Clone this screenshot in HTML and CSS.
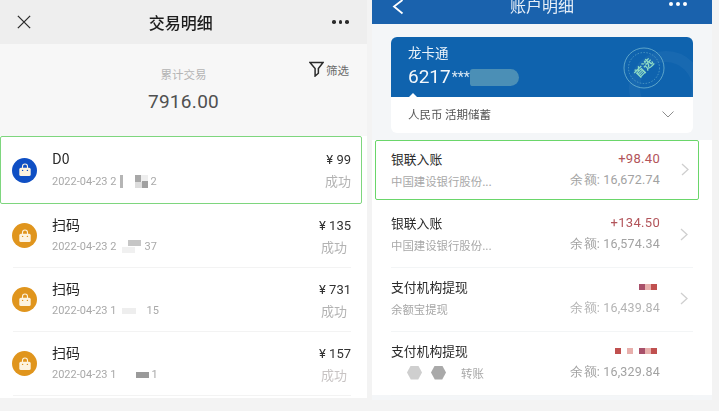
FILE: index.html
```html
<!DOCTYPE html>
<html lang="zh">
<head>
<meta charset="utf-8">
<title>交易明细</title>
<link rel="stylesheet" href="styles.css">
</head>
<body>
<main class="page">
  <section class="wx">
    <header class="wx-bar">
      <svg class="wx-close" viewBox="0 0 16 16"><path d="M1 1l14 14M15 1L1 15"/></svg>
      <h1 class="wx-title">交易明细</h1>
      <div class="dots"><i></i><i></i><i></i></div>
    </header>
    <div class="summary">
      <div class="filter">
        <svg class="filter-icon" viewBox="0 0 16 17"><path d="M1 1.500h14L10 8v5l-3.500 3V8z"/></svg>
        <span>筛选</span>
      </div>
      <div class="summary-label">累计交易</div>
      <div class="summary-value">7916.00</div>
    </div>
    <ul class="tx-list">
      <li class="tx tx-first">
        <span class="bag bag-blue"><svg viewBox="0 0 14 14"><path class="bag-handle" d="M4.500 5V3.500a2.500 2.500 0 0 1 5 0V5"/><rect class="bag-body" x="1.300" y="4.800" width="11.400" height="8.200" rx="1.600"/><circle class="bag-dot" cx="4.600" cy="7.400" r=".7"/><circle class="bag-dot" cx="9.400" cy="7.400" r=".7"/></svg></span>
        <div class="tx-main">
          <div class="tx-name">D0</div>
          <div class="tx-time">2022-04-23 2<b class="m m1"></b><b class="m m2"></b>2</div>
        </div>
        <div class="tx-side tx-side-first"><div class="tx-amt">¥ 99</div><div class="tx-state">成功</div></div>
      </li>
      <li class="tx">
        <span class="bag"><svg viewBox="0 0 14 14"><path class="bag-handle" d="M4.500 5V3.500a2.500 2.500 0 0 1 5 0V5"/><rect class="bag-body" x="1.300" y="4.800" width="11.400" height="8.200" rx="1.600"/><circle class="bag-dot" cx="4.600" cy="7.400" r=".7"/><circle class="bag-dot" cx="9.400" cy="7.400" r=".7"/></svg></span>
        <div class="tx-main">
          <div class="tx-name">扫码</div>
          <div class="tx-time">2022-04-23 2<b class="m m3"></b>37</div>
        </div>
        <div class="tx-side"><div class="tx-amt">¥ 135</div><div class="tx-state">成功</div></div>
      </li>
      <li class="tx">
        <span class="bag"><svg viewBox="0 0 14 14"><path class="bag-handle" d="M4.500 5V3.500a2.500 2.500 0 0 1 5 0V5"/><rect class="bag-body" x="1.300" y="4.800" width="11.400" height="8.200" rx="1.600"/><circle class="bag-dot" cx="4.600" cy="7.400" r=".7"/><circle class="bag-dot" cx="9.400" cy="7.400" r=".7"/></svg></span>
        <div class="tx-main">
          <div class="tx-name">扫码</div>
          <div class="tx-time">2022-04-23 1<b class="m m4"></b>15</div>
        </div>
        <div class="tx-side"><div class="tx-amt">¥ 731</div><div class="tx-state">成功</div></div>
      </li>
      <li class="tx">
        <span class="bag"><svg viewBox="0 0 14 14"><path class="bag-handle" d="M4.500 5V3.500a2.500 2.500 0 0 1 5 0V5"/><rect class="bag-body" x="1.300" y="4.800" width="11.400" height="8.200" rx="1.600"/><circle class="bag-dot" cx="4.600" cy="7.400" r=".7"/><circle class="bag-dot" cx="9.400" cy="7.400" r=".7"/></svg></span>
        <div class="tx-main">
          <div class="tx-name">扫码</div>
          <div class="tx-time">2022-04-23 1<b class="m m5"></b>1</div>
        </div>
        <div class="tx-side"><div class="tx-amt">¥ 157</div><div class="tx-state tx-state-light">成功</div></div>
      </li>
    </ul>
  </section>

  <section class="bank">
    <header class="bank-bar">
      <svg class="bank-back" viewBox="0 0 12 16"><path d="M10.500 1L2 7.500l8.500 7"/></svg>
      <h1 class="bank-title">账户明细</h1>
      <div class="dots dots-white"><i></i><i></i><i></i></div>
    </header>
    <div class="card">
      <div class="card-top">
        <span class="ring"></span>
        <div class="card-name">龙卡通</div>
        <div class="card-no">6217<span class="stars">***</span><b class="blob"></b></div>
        <svg class="stamp" viewBox="0 0 44 44">
          <circle class="stamp-o" cx="22" cy="22" r="20"/>
          <circle class="stamp-i" cx="22" cy="22" r="15.500"/>
          <text class="stamp-t" x="22" y="26" transform="rotate(-45 22 22)">首选</text>
        </svg>
        <span class="notch"></span>
      </div>
      <div class="card-bottom">
        <span>人民币 活期储蓄</span>
        <svg class="chev-down" viewBox="0 0 12 7"><path d="M.5.5L6 6 11.500.5"/></svg>
      </div>
    </div>
    <ul class="acc-list">
      <li class="acc acc-first">
        <div class="acc-row"><span class="acc-name">银联入账</span><span class="acc-amt">+98.40</span></div>
        <div class="acc-row"><span class="acc-sub">中国建设银行股份...</span><span class="acc-bal">余额: 16,672.74</span></div>
        <svg class="chev" viewBox="0 0 8 13"><path d="M1 1l6 5.500L1 12"/></svg>
      </li>
      <li class="acc">
        <div class="acc-row"><span class="acc-name">银联入账</span><span class="acc-amt">+134.50</span></div>
        <div class="acc-row"><span class="acc-sub">中国建设银行股份...</span><span class="acc-bal">余额: 16,574.34</span></div>
        <svg class="chev" viewBox="0 0 8 13"><path d="M1 1l6 5.500L1 12"/></svg>
      </li>
      <li class="acc">
        <div class="acc-row"><span class="acc-name">支付机构提现</span><span class="pix"><b class="p-c"></b><b class="p-b"></b><b class="p-a"></b></span></div>
        <div class="acc-row"><span class="acc-sub">余额宝提现</span><span class="acc-bal acc-bal-faded">余额: 16,439.84</span></div>
        <svg class="chev" viewBox="0 0 8 13"><path d="M1 1l6 5.500L1 12"/></svg>
      </li>
      <li class="acc">
        <div class="acc-row"><span class="acc-name">支付机构提现</span><span class="pix"><b class="p-a"></b><b class="p-gap"></b><b class="p-b"></b><b class="p-gap"></b><b class="p-c"></b><b class="p-b"></b><b class="p-a"></b></span></div>
        <div class="acc-row"><span class="acc-sub acc-sub-hex"><b class="hex hex-l"></b><b class="hex hex-d"></b><span class="tail">转账</span></span><span class="acc-bal">余额: 16,329.84</span></div>
      </li>
    </ul>
  </section>
</main>
</body>
</html>
```
FILE: styles.css
```css
* { box-sizing: border-box; }
html, body { margin: 0; padding: 0; }
body {
  width: 719px;
  height: 411px;
  overflow: hidden;
  background: #f3f3f3;
  font-family: "Noto Sans CJK SC", Roboto, sans-serif;
}
ul { list-style: none; margin: 0; padding: 0; }
h1 { margin: 0; font-weight: 500; }
.page { display: flex; align-items: flex-start; height: 411px; filter: blur(.3px); }
.page svg { display: block; }

/* left panel */
.wx { width: 367px; height: 398px; flex: none; background: #fff; }
.wx-bar {
  height: 44px;
  background: #eeeeee;
  display: flex;
  align-items: center;
  justify-content: space-between;
  padding: 0 18px 0 17px;
}
.wx-close { width: 14px; height: 14px; fill: none; stroke: #2b2b2b; stroke-width: 1.500; }
.wx-title { font-size: 16px; color: #1d1d1d; line-height: 22px; margin-right: 2px; }
.dots { display: flex; gap: 3px; }
.dots i { width: 3.500px; height: 3.500px; border-radius: 50%; background: #2b2b2b; }
.dots-white i { background: #fff; width: 4px; height: 4px; }

.summary {
  position: relative;
  height: 92px;
  background: #f7f7f7;
  padding-top: 22px;
  text-align: center;
}
.summary-label { font-size: 11.500px; line-height: 16px; color: #b4b4b4; }
.summary-value { font-family: Roboto, sans-serif; font-size: 19px; line-height: 24px; margin-top: 8px; color: #505050; letter-spacing: .3px; }
.filter {
  position: absolute;
  top: 17px;
  right: 18px;
  display: flex;
  align-items: center;
  gap: 2px;
  font-size: 11.500px;
  color: #6a6a6a;
}
.filter-icon { width: 15px; height: 16px; fill: none; stroke: #2b2b2b; stroke-width: 1.600; }
.filter span { transform: translateY(1px); }

.tx-list { background: #fff; }
.tx {
  position: relative;
  display: flex;
  align-items: center;
  height: 64px;
  margin: 0 16px 0 13px;
  border-bottom: 1px solid #f3f3f3;
}
.tx-first {
  height: 68px;
  margin: 0 5px 0 0;
  padding: 0 10px 0 12px;
  border: 1px solid #7ed67e;
  border-radius: 2px;
}
.tx-first .bag { margin-left: -1px; }
.bag {
  width: 25px;
  height: 25px;
  flex: none;
  margin-left: -1px;
  border-radius: 50%;
  color: #e0951d;
  background: #e0951d;
  display: flex;
  align-items: center;
  justify-content: center;
}
.bag-blue { color: #0f4fc4; background: #0f4fc4; }
.bag svg { width: 14px; height: 14px; }
.bag-handle { fill: none; stroke: #fdf3df; stroke-width: 1.100; }
.bag-body { fill: #fdf3df; }
.bag-dot { fill: currentColor; }
.tx-main { flex: 1; margin-left: 15px; padding-bottom: 3px; }
.tx-name { font-size: 14px; line-height: 20px; color: #262626; }
.tx-time {
  display: flex;
  align-items: center;
  height: 16px;
  margin-top: 5px;
  font-family: Roboto, sans-serif;
  font-size: 11px;
  color: #a9a9a9;
  white-space: nowrap;
}
.m { display: block; flex: none; }
.m1 { width: 3px; height: 13px; margin: 0 12px 0 4px; background: #b5b5b5; }
.m2 { width: 13px; height: 13px; margin-right: 2px; background: conic-gradient(#eee 0 25%, #a0a0a0 0 50%, #ddd 0 75%, #a8a8a8 0); }
.m3 { width: 13px; height: 6px; margin: 0 3px 0 12px; background: #c6c6c6; transform: translateY(-4px); box-shadow: -6px 7px 0 #f0f0f0; }
.m4 { width: 14px; height: 6px; margin: 0 10px 0 6px; background: #eeeeee; }
.m5 { width: 13px; height: 6px; margin: 0 2px 0 20px; background: #9a9a9a; }
.tx-side { text-align: right; width: 60px; }
.tx-amt { font-family: Roboto, sans-serif; font-size: 13px; line-height: 20px; color: #333; }
.tx-state { font-size: 13px; line-height: 18px; margin-top: 2px; margin-right: 4px; color: #b3b3b3; }
.tx-side-first .tx-state { margin-right: 0; }
.tx-state-light { color: #c8c4c4; }

/* right panel */
.bank {
  width: 340px;
  height: 400px;
  flex: none;
  margin-left: 5px;
  background: #f4f6f8;
}
.bank-bar {
  height: 24px;
  background: #1a62ad;
  display: flex;
  align-items: flex-start;
  justify-content: space-between;
  overflow: hidden;
  position: relative;
  padding: 0 25px 0 20px;
}
.bank-back { width: 12px; height: 16px; fill: none; stroke: #fff; stroke-width: 1.800; margin-top: -1px; }
.bank-title { position: absolute; left: 138px; top: -6px; font-size: 16px; line-height: 22px; font-weight: 400; color: #e6eef7; }
.dots-white { margin-top: 2px; }
.card {
  width: 302px;
  height: 96px;
  margin: 13px 0 0 19px;
  border-radius: 6px;
  overflow: hidden;
  background: #fff;
}
.card-top {
  position: relative;
  height: 60px;
  overflow: hidden;
  background: #0f63ae;
  padding: 5px 0 0 17px;
  color: #fff;
}
.ring {
  position: absolute;
  right: -10px;
  top: 14px;
  width: 74px;
  height: 74px;
  border: 11px solid #2a76b6;
  border-radius: 50%;
  opacity: .35;
}
.card-name { font-size: 13.500px; line-height: 20px; color: #eaf3fa; }
.card-no { display: flex; align-items: center; font-family: Roboto, sans-serif; font-size: 19px; line-height: 26px; margin-top: 2px; color: #f2f7fb; }
.stars { font-size: 14px; margin-left: 1px; color: #dce9f3; }
.blob { width: 49px; height: 17px; margin-left: 0; border-radius: 3px 9px 9px 3px; background: #4b8fb6; }
.stamp { position: absolute; right: 27px; top: 9px; width: 44px; height: 44px; }
.stamp-o { fill: none; stroke: #6fb4cf; stroke-width: .8; }
.stamp-i { fill: none; stroke: #6fb4cf; stroke-width: .6; stroke-dasharray: 1.500 1.500; }
.stamp-t { font-size: 11px; font-weight: 700; fill: #8fdcc4; text-anchor: middle; }
.notch {
  position: absolute;
  left: 18px;
  bottom: 0;
  width: 0;
  height: 0;
  border: 4px solid transparent;
  border-top: 0;
  border-bottom-color: #fff;
}
.card-bottom {
  height: 36px;
  display: flex;
  align-items: center;
  justify-content: space-between;
  padding: 0 19px 2px 17px;
  font-size: 11.500px;
  color: #555;
}
.chev-down { width: 12px; height: 7px; fill: none; stroke: #8d8d8d; stroke-width: 1; }

.acc-list { background: #fff; margin-top: 12px; height: 255px; }
.acc {
  position: relative;
  height: 64px;
  margin: 0 19px;
  padding: 8px 33px 0 0;
  border-bottom: 1px solid #f3f5f6;
}
.acc-first {
  height: 60px;
  margin: -5px 13px 4px 3px;
  padding: 7px 38px 0 15px;
  border: 1px solid #6ad66a;
  border-radius: 2px;
  background: #fff;
}
.acc-row { display: flex; align-items: center; justify-content: space-between; height: 21px; }
.acc-row + .acc-row { margin-top: 1px; }
.acc-name { font-size: 12.800px; color: #2b2b2b; }
.acc-amt { font-family: Roboto, sans-serif; font-size: 13px; color: #b2545a; letter-spacing: .3px; }
.acc-sub { font-size: 11.400px; color: #a8a8a8; }
.acc-bal { font-family: Roboto, sans-serif; font-size: 12.500px; color: #a2a2a2; letter-spacing: .2px; }
.acc-bal-faded { color: #b4b4b4; }
.chev { position: absolute; right: 5px; top: 24px; width: 8px; height: 13px; fill: none; stroke: #cfcfcf; stroke-width: 1.300; }
.acc-first .chev { right: 9px; top: 22px; }
.pix { display: flex; margin-right: 3px; }
.pix b { width: 6px; height: 6px; display: block; }
.p-a { background: #c0504f; }
.p-b { background: #e8b0ad; }
.p-c { background: #a8506a; }
.p-gap { background: transparent; }
.acc-sub-hex { display: flex; align-items: center; gap: 9px; padding-left: 16px; }
.hex { display: block; width: 15px; height: 14px; clip-path: polygon(25% 0, 75% 0, 100% 50%, 75% 100%, 25% 100%, 0 50%); }
.hex-l { background: #cfcfcf; }
.hex-d { background: #a9a9a9; }
.tail { margin-left: 6px; }
```
